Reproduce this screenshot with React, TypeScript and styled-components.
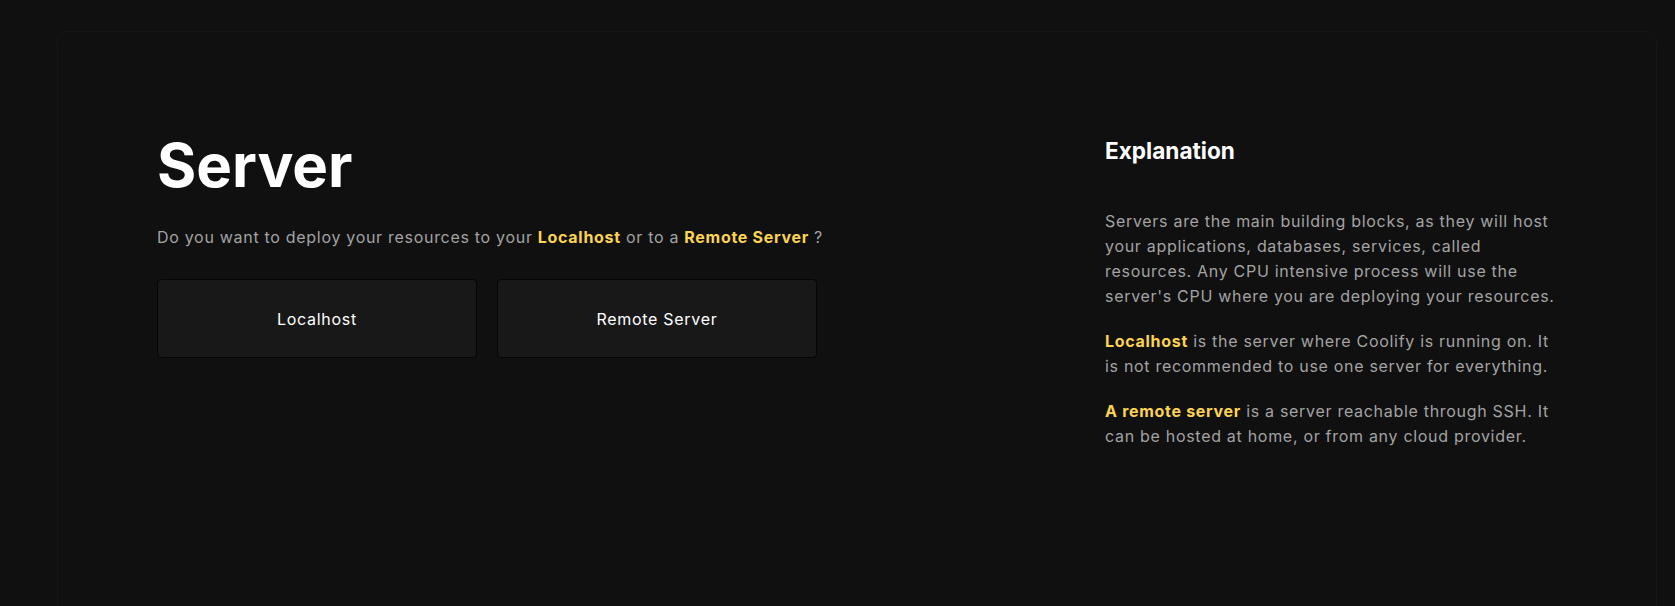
import styled, { createGlobalStyle } from "styled-components";

const GlobalStyle = createGlobalStyle`
    html, body {
        margin: 0;
        padding: 0;
        background: #101010;
        font-family: Inter, "Noto Sans", sans-serif;
        -webkit-font-smoothing: antialiased;
    }
`;

const Page = styled.div`
    height: 606px;
    overflow: hidden;
    padding: 31px 0 0 57px;
    box-sizing: border-box;
`;

const Frame = styled.div`
    width: 1600px;
    height: 620px;
    box-sizing: border-box;
    border: 1px solid #161616;
    border-radius: 10px;
    padding: 103px 0 0 99px;
    display: flex;
`;

const Main = styled.section`
    width: 948px;
    flex-shrink: 0;
`;

const Title = styled.h1`
    margin: 0;
    font-size: 60px;
    line-height: 60px;
    font-weight: 700;
    color: #fff;
`;

const Lead = styled.p`
    margin: 30px 0 0;
    font-size: 16px;
    line-height: 24px;
    letter-spacing: 0.7px;
    color: #a3a3a3;
`;

const Accent = styled.span`
    color: #fcd452;
    font-weight: 700;
`;

const Choices = styled.div`
    display: flex;
    gap: 20px;
    margin-top: 30px;
`;

const Choice = styled.button`
    width: 320px;
    height: 79px;
    background: #181818;
    border: 1px solid #050505;
    border-radius: 4px;
    color: #fff;
    font-family: inherit;
    font-size: 16px;
    letter-spacing: 0.7px;
    cursor: pointer;
    &:hover {
        background: #202020;
    }
`;

const Aside = styled.aside`
    width: 450px;
`;

const AsideTitle = styled.h2`
    margin: 0 0 42px;
    font-size: 22.6px;
    line-height: 32px;
    font-weight: 700;
    color: #fff;
`;

const Para = styled.p`
    margin: 0 0 20px;
    font-size: 16px;
    line-height: 25px;
    letter-spacing: 0.7px;
    color: #a3a3a3;
`;

export default function App() {
    return (
        <>
            <GlobalStyle />
            <Page>
                <Frame>
                    <Main>
                        <Title>Server</Title>
                        <Lead>
                            Do you want to deploy your resources to your <Accent>Localhost</Accent> or to a{" "}
                            <Accent>Remote Server</Accent> ?
                        </Lead>
                        <Choices>
                            <Choice>Localhost</Choice>
                            <Choice>Remote Server</Choice>
                        </Choices>
                    </Main>
                    <Aside>
                        <AsideTitle>Explanation</AsideTitle>
                        <Para>
                            Servers are the main building blocks, as they will host your applications, databases,
                            services, called resources. Any CPU intensive process will use the server's CPU where you
                            are deploying your resources.
                        </Para>
                        <Para>
                            <Accent>Localhost</Accent> is the server where Coolify is running on. It is not recommended
                            to use one server for everything.
                        </Para>
                        <Para>
                            <Accent>A remote server</Accent> is a server reachable through SSH. It can be hosted at home,
                            or from any cloud provider.
                        </Para>
                    </Aside>
                </Frame>
            </Page>
        </>
    );
}
